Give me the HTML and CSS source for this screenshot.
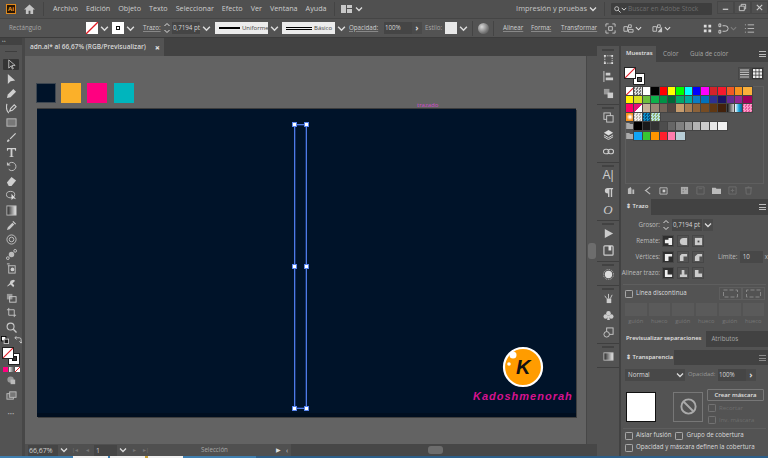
FILE: index.html
```html
<!DOCTYPE html>
<html lang="es">
<head><meta charset="utf-8"><title>Adobe Illustrator</title><link rel="stylesheet" href="styles.css"></head>
<body>
<svg class="defs" width="0" height="0">
  <symbol id="chev" viewBox="0 0 8 8"><path d="M1 2.5 4 5.5 7 2.5" fill="none" stroke="#dcdcdc" stroke-width="1.3"/></symbol>
  <symbol id="box" viewBox="0 0 9 9"><rect x=".5" y=".5" width="8" height="8" rx="1" fill="none" stroke="#b8b8b8"/></symbol>
</svg>
<header class="menubar">
  <span class="ai-logo">Ai</span>
  <svg class="home" viewBox="0 0 12 11"><path d="M6 .5 0 6h2v5h3V7.5h2V11h3V6h2z" fill="#c4c4c4"/></svg>
  <i class="vsep first"></i>
  <nav class="menu"><span>Archivo</span><span>Edición</span><span>Objeto</span><span>Texto</span><span>Seleccionar</span><span>Efecto</span><span>Ver</span><span>Ventana</span><span>Ayuda</span></nav>
  <i class="vsep"></i>
  <svg class="layout-ic" viewBox="0 0 11 8"><path d="M0 0h5v8H0zM6 0h5v3H6zM6 4h5v4H6z" fill="#c8c8c8"/></svg>
  <svg class="ch" viewBox="0 0 8 8"><use href="#chev"/></svg>
  <span class="spacer"></span>
  <span class="workspace">Impresión y pruebas</span>
  <svg class="ch" viewBox="0 0 8 8"><use href="#chev"/></svg>
  <i class="vsep"></i>
  <div class="stock"><svg class="search" viewBox="0 0 9 9"><circle cx="3.5" cy="3.5" r="2.6" fill="none" stroke="#ddd"/><path d="M5.5 5.5 8.5 8.5" stroke="#ddd" stroke-width="1.2"/></svg><svg class="mini" viewBox="0 0 8 8"><use href="#chev"/></svg><span>Buscar en Adobe Stock</span></div>
  <div class="winbtns">
    <span><svg viewBox="0 0 10 10"><path d="M2 7h6" stroke="#ccc" stroke-width="1.4"/></svg></span>
    <span><svg viewBox="0 0 10 10"><path d="M1.5 3.5h5.5v5h-5.5zM3.500 3.5V1.500h5v5H7" fill="none" stroke="#ccc"/></svg></span>
    <span><svg viewBox="0 0 10 10"><path d="M2 2l6 6M8 2 2 8" stroke="#ccc" stroke-width="1.2"/></svg></span>
  </div>
</header>

<section class="controlbar">
  <span class="lbl sel-name">Rectángulo</span>
  <span class="swatch fill"><svg viewBox="0 0 12 12"><path d="M0 12 12 0" stroke="#e01b24" stroke-width="1.3"/></svg></span>
  <svg class="ch drop" viewBox="0 0 8 8"><use href="#chev"/></svg>
  <span class="swatch strokebox"><i></i></span>
  <svg class="ch drop" viewBox="0 0 8 8"><use href="#chev"/></svg>
  <span class="lbl link trazo">Trazo:</span>
  <svg class="stepper" viewBox="0 0 8 12"><path d="M1.5 4 4 1.5 6.5 4M1.5 8 4 10.5 6.5 8" fill="none" stroke="#ddd"/></svg>
  <span class="field w28">0,7194 pt</span>
  <svg class="ch drop" viewBox="0 0 8 8"><use href="#chev"/></svg>
  <span class="profile"><i class="line thick"></i><b>Uniforme</b></span>
  <svg class="ch drop" viewBox="0 0 8 8"><use href="#chev"/></svg>
  <span class="profile second"><i class="line double"></i><b>Básico</b></span>
  <svg class="ch drop" viewBox="0 0 8 8"><use href="#chev"/></svg>
  <span class="lbl link opac">Opacidad:</span>
  <span class="field pct">100%</span>
  <span class="arrow-btn">›</span>
  <span class="lbl estilo">Estilo:</span>
  <span class="swatch style"></span>
  <svg class="ch drop" viewBox="0 0 8 8"><use href="#chev"/></svg>
  <i class="vsep ctl"></i>
  <span class="globe"></span>
  <i class="vsep ctl"></i>
  <span class="lbl link alinear">Alinear</span>
  <span class="lbl link forma">Forma:</span>
  <span class="lbl link transf">Transformar</span>
  <svg class="ci first-ci" viewBox="0 0 12 12"><path d="M1 4V1h3M8 1h3v3M11 8v3H8M4 11H1V8M4 4h4v4H4z" fill="none" stroke="#c6c6c6"/></svg>
  <svg class="ci ci2" viewBox="0 0 12 12"><path d="M1 4h4v5H1zM6 2h3v3H6zM6 7h5v3H6z" fill="none" stroke="#c6c6c6"/></svg>
  <svg class="ch small" viewBox="0 0 8 8"><use href="#chev"/></svg>
  <svg class="ci ci3" viewBox="0 0 12 12"><path d="M1 4h4v5H1zM6 2h3v3H6z" fill="none" stroke="#c6c6c6"/><path d="M6 10 11 4v6z" fill="#c6c6c6"/></svg>
  <svg class="ch small" viewBox="0 0 8 8"><use href="#chev"/></svg>
  <svg class="ci ci4" viewBox="0 0 12 12"><path d="M2 2h3v3H2zM7 2h3v3H7zM2 7h3v3H2zM7 7h3v3H7z" fill="#dcdcdc"/></svg>
  <svg class="ci ci5" viewBox="0 0 12 12"><path d="M1 1h2v3H1zM1 8h2v3H1zM5 3h3q3 0 3 3t-3 3H5" fill="none" stroke="#d0d0d0"/></svg>
  <svg class="ch small dim" viewBox="0 0 8 8"><use href="#chev"/></svg>
  <svg class="ci ci6" viewBox="0 0 12 12"><path d="M1 2h1M4 2h7M1 6h1M4 6h7M1 10h1M4 10h7" stroke="#bdbdbd"/></svg>
</section>

<main class="workspace-area">
  <aside class="toolbar">
    <div class="collapse">‣‣</div>
    <div class="grip"></div>
    <div class="tools">
      <span class="tool active"><svg viewBox="0 0 12 12"><path d="M3 1v9l2.5-2.500L7 11l1-.5L6.500 7H10z" fill="none" stroke="#ddd" stroke-width=".8"/></svg></span>
      <span class="tool"><svg viewBox="0 0 12 12"><path d="M2 0v11l3-3 5-1z" fill="#cfcfcf"/></svg></span>
      <span class="tool"><svg viewBox="0 0 12 12"><path d="M1 11 2 7l6-6 3 3-6 6z" fill="#cfcfcf"/></svg></span>
      <span class="tool"><svg viewBox="0 0 12 12"><path d="M1 1C0 5 1 9 3 11M4 9l1-3 4-4 2 2-4 4z" fill="none" stroke="#cfcfcf" stroke-width="1.2"/></svg></span>
      <span class="tool"><svg viewBox="0 0 12 12"><rect x="1" y="2" width="10" height="8" fill="#777" stroke="#bbb"/></svg></span>
      <span class="tool"><svg viewBox="0 0 12 12"><path d="M1 11q0-3 2-3l1 1q0 2-3 2zM4 7l6-6 1 1-6 6z" fill="#cfcfcf"/></svg></span>
      <span class="tool"><svg viewBox="0 0 12 12"><path d="M1 1h10v3h-1L9.500 2.500H7V10l1.500.5V11h-5v-.5L5 10V2.500H2.500L2 4H1z" fill="#cfcfcf"/></svg></span>
      <span class="tool"><svg viewBox="0 0 12 12"><path d="M3 3a4.500 4.500 0 1 1 0 6" fill="none" stroke="#c4c4c4"/><path d="M1 1v4h4z" fill="#c4c4c4"/></svg></span>
      <span class="tool"><svg viewBox="0 0 12 12"><path d="M1 7 6 1l5 4-5 6H3z" fill="#cfcfcf"/></svg></span>
      <span class="tool"><svg viewBox="0 0 12 12"><ellipse cx="5" cy="5" rx="4.500" ry="3.500" fill="none" stroke="#c4c4c4"/><path d="M6 4v7l2-2 3 1z" fill="#ddd"/></svg></span>
      <span class="tool"><svg viewBox="0 0 12 12"><defs><linearGradient id="gr"><stop offset="0" stop-color="#222"/><stop offset="1" stop-color="#eee"/></linearGradient></defs><rect x="1" y="1" width="10" height="10" fill="url(#gr)" stroke="#bbb"/></svg></span>
      <span class="tool"><svg viewBox="0 0 12 12"><path d="M1 11l1-3 5-5 2 2-5 5zM7 2l1-1 3 3-1 1z" fill="#c8c8c8"/></svg></span>
      <span class="tool"><svg viewBox="0 0 12 12"><circle cx="6" cy="6" r="5" fill="none" stroke="#c4c4c4"/><circle cx="6" cy="6" r="2.500" fill="none" stroke="#c4c4c4"/></svg></span>
      <span class="tool"><svg viewBox="0 0 12 12"><circle cx="6" cy="6" r="3" fill="#bbb"/><circle cx="10" cy="2" r="1.500" fill="none" stroke="#ccc"/><circle cx="2" cy="10" r="1.500" fill="none" stroke="#ccc"/></svg></span>
      <span class="tool"><svg viewBox="0 0 12 12"><rect x="3" y="3" width="7" height="8" fill="none" stroke="#c4c4c4"/><circle cx="7" cy="7" r="2" fill="#ccc"/><path d="M1 1h3M2 3h1" stroke="#ccc"/></svg></span>
      <span class="tool"><svg viewBox="0 0 12 12"><path d="M1 9l3-3 1-3 3-1 2 1-3 3 2 2-1 2-3-3-3 2z" fill="#cfcfcf"/></svg></span>
      <span class="tool"><svg viewBox="0 0 12 12"><rect x="1" y="1" width="6" height="6" fill="#999"/><rect x="4" y="4" width="7" height="6" fill="none" stroke="#ccc"/></svg></span>
      <span class="tool"><svg viewBox="0 0 12 12"><path d="M3 1v8h8M1 3h8v8" fill="none" stroke="#c4c4c4"/></svg></span>
      <span class="tool"><svg viewBox="0 0 12 12"><circle cx="5" cy="5" r="3.800" fill="none" stroke="#c8c8c8" stroke-width="1.2"/><path d="M8 8l3.500 3.500" stroke="#c8c8c8" stroke-width="1.5"/></svg></span>
    </div>
    <div class="swap-row">
      <svg viewBox="0 0 9 9"><rect x=".5" y=".5" width="5" height="5" fill="#fff" stroke="#000"/><rect x="3.500" y="3.500" width="5" height="5" fill="#222" stroke="#ccc"/></svg>
      <svg viewBox="0 0 9 9"><path d="M1 2h5q2 0 2 2v4M1 2l2-2M1 2l2 2M8 8 6 6M8 8l2-2" fill="none" stroke="#ccc"/></svg>
    </div>
    <div class="fillstroke">
      <span class="fs-stroke"><i></i></span>
      <span class="fs-fill"><svg viewBox="0 0 12 12"><path d="M0 12 12 0" stroke="#e01b24" stroke-width="1.3"/></svg></span>
    </div>
    <div class="modes"><i class="m1"></i><i class="m2"></i><i class="m3"><svg viewBox="0 0 5 5"><path d="M0 5 5 0" stroke="#e01b24"/></svg></i></div>
    <span class="tool t-draw"><svg viewBox="0 0 12 12"><circle cx="5" cy="5" r="3.500" fill="#999"/><rect x="5" y="5" width="5" height="5" fill="#bbb"/></svg></span>
    <span class="tool t-screen"><svg viewBox="0 0 12 12"><rect x="1" y="4" width="7" height="6" fill="#666" stroke="#bbb"/><rect x="4" y="2" width="7" height="6" fill="#777" stroke="#bbb"/></svg></span>
    <div class="dots">•••</div>
  </aside>

  <div class="center">
    <div class="tabs"><div class="doc-tab"><span>adn.ai* al 66,67% (RGB/Previsualizar)</span><b>×</b></div></div>
    <div class="canvas-row">
      <div class="canvas">
        <i class="chip c1"></i><i class="chip c2"></i><i class="chip c3"></i><i class="chip c4"></i>
        <div class="artboard"></div>
        <span class="smart">trazado</span>
        <div class="selection">
          <i class="h tl"></i><i class="h tr"></i><i class="h ml"></i><i class="h mr"></i><i class="h bl"></i><i class="h br"></i>
        </div>
        <div class="logo"><svg viewBox="0 0 42 42"><circle cx="21" cy="21" r="19" fill="#ff9c00" stroke="#fff" stroke-width="2.2"/><circle cx="11" cy="9" r="3.500" fill="#fff"/><circle cx="7" cy="18" r="1.800" fill="#fff"/></svg><b>K</b></div>
        <div class="brand">Kadoshmenorah</div>
      </div>
      <div class="vscroll"><i></i></div>
    </div>
    <footer class="status">
      <span class="zoomfield">66,67%</span>
      <svg class="ch" viewBox="0 0 8 8"><use href="#chev"/></svg>
      <span class="nav">|◂</span><span class="nav">◂</span>
      <span class="page">1</span>
      <svg class="ch" viewBox="0 0 8 8"><use href="#chev"/></svg>
      <span class="nav">▸</span><span class="nav">▸|</span>
      <span class="mode">Selección</span>
      <span class="play">▶</span><span class="back">‹</span>
      <div class="hscroll"><i></i></div>
    </footer>
  </div>

  <aside class="dock">
    <div class="dock-group">
      <svg viewBox="0 0 12 12"><path d="M2 2h8v8H2z" fill="none" stroke="#ccc" stroke-dasharray="1.500 1"/><path d="M1 1h2v2H1zM9 1h2v2H9zM1 9h2v2H1zM9 9h2v2H9z" fill="#ddd"/></svg>
      <svg viewBox="0 0 12 12"><path d="M1 0v12" stroke="#ccc"/><path d="M3 2h5v3H3zM3 7h8v3H3z" fill="#ccc"/></svg>
      <svg viewBox="0 0 12 12"><path d="M1 1h6v6H1z" fill="#999"/><path d="M5 5h6v6H5z" fill="#ccc"/></svg>
    </div>
    <div class="dock-group">
      <svg viewBox="0 0 12 12"><rect x="1" y="1" width="7" height="7" fill="none" stroke="#ccc"/><rect x="4" y="4" width="7" height="7" fill="#535353" stroke="#ccc"/></svg>
      <svg viewBox="0 0 12 12"><path d="M6 1 11 4 6 7 1 4z" fill="#ddd"/><path d="M1 6.500 6 9.500 11 6.500M1 8.500 6 11.500 11 8.500" fill="none" stroke="#ddd"/></svg>
      <svg viewBox="0 0 12 12"><rect x=".5" y="3.500" width="6" height="5" rx="2.500" fill="none" stroke="#ccc" stroke-width="1.2"/><rect x="5.500" y="3.500" width="6" height="5" rx="2.500" fill="none" stroke="#ccc" stroke-width="1.2"/></svg>
    </div>
    <div class="dock-group">
      <span class="glyph">A|</span>
      <svg viewBox="0 0 12 12"><path d="M5 1h6v1.500h-1V11H8.500V2.500H7V11H5.500V7Q2 7 2 4t3-3z" fill="#ccc"/></svg>
      <span class="glyph ital">O</span>
    </div>
    <div class="dock-group">
      <svg viewBox="0 0 12 12"><path d="M2 1v10l9-5z" fill="#ccc"/></svg>
      <svg viewBox="0 0 12 12"><rect x="1" y="1" width="10" height="10" rx="1" fill="none" stroke="#ccc" stroke-width="1.3"/><path d="M6 1h3v5H6z" fill="#ddd"/></svg>
    </div>
    <div class="dock-group">
      <svg viewBox="0 0 12 12"><circle cx="6" cy="6" r="4" fill="#ddd"/><circle cx="6" cy="6" r="5.500" fill="none" stroke="#bbb" stroke-dasharray="1 1"/></svg>
    </div>
    <div class="dock-group">
      <svg viewBox="0 0 12 12"><path d="M4 6h5v5H4z" fill="#ccc"/><path d="M6 6V1M8 6l2-4M4 6 2 3" stroke="#ccc"/></svg>
      <svg viewBox="0 0 12 12"><circle cx="6" cy="3.500" r="2.500" fill="#ccc"/><circle cx="3" cy="7" r="2.500" fill="#ccc"/><circle cx="9" cy="7" r="2.500" fill="#ccc"/><path d="M5.500 6h1l1 5h-3z" fill="#ccc"/></svg>
      <svg viewBox="0 0 12 12"><rect x="4" y="1" width="7" height="7" fill="none" stroke="#ccc"/><circle cx="4" cy="8" r="3" fill="#535353" stroke="#ccc"/></svg>
    </div>
    <div class="dock-group">
      <svg viewBox="0 0 12 12"><rect x="1" y="2" width="10" height="8" fill="url(#gr)" stroke="#bbb"/></svg>
    </div>
  </aside>

  <div class="panels">
    <section class="panel swatches">
      <div class="ptabs"><span class="on t1">Muestras</span><span class="t2">Color</span><span class="t3">Guía de color</span><em class="burger"></em></div>
      <div class="sw-head">
        <div class="fs-mini"><span class="mini-stroke"><i></i></span><span class="mini-fill"><svg viewBox="0 0 12 12"><path d="M0 12 12 0" stroke="#e01b24" stroke-width="1.3"/></svg></span></div>
        <div class="views"><span class="list"><svg viewBox="0 0 9 9"><path d="M0 1h9M0 3.300h9M0 5.600h9M0 8h9" stroke="#ccc"/></svg></span><span class="grid on"><svg viewBox="0 0 9 9"><path d="M0 0h2.500v2.500H0zM3.200 0h2.500v2.500H3.200zM6.500 0H9v2.500H6.500zM0 3.200h2.500v2.500H0zM3.200 3.200h2.500v2.500H3.200zM6.500 3.200H9v2.500H6.500zM0 6.500h2.500V9H0zM3.200 6.500h2.500V9H3.200zM6.500 6.500H9V9H6.500z" fill="#eee"/></svg></span></div>
      </div>
      <div class="sw-list">
        <div class="sw-row">
          <i class="none"><svg viewBox="0 0 8 8"><path d="M0 8 8 0" stroke="#e01b24"/></svg></i><i class="pat1"></i><i style="background:#fff"></i><i style="background:#000"></i><i style="background:#f00"></i><i style="background:#ff0"></i><i style="background:#0f0"></i><i style="background:#0ff"></i><i style="background:#00f"></i><i style="background:#f0f"></i><i style="background:#d4232a"></i><i style="background:#f7192e"></i><i style="background:#f15a24"></i><i style="background:#f7931e"></i><i style="background:#fbb03b"></i>
        </div>
        <div class="sw-row">
          <i style="background:#fff200"></i><i style="background:#d9e021"></i><i style="background:#6cbe3f"></i><i style="background:#0db14b"></i><i style="background:#009245"></i><i style="background:#006837"></i><i style="background:#00a86b"></i><i style="background:#00a99d"></i><i style="background:#0a7cc4"></i><i style="background:#0071bc"></i><i style="background:#2e3192"></i><i style="background:#1b1464"></i><i style="background:#662d91"></i><i style="background:#93278f"></i><i style="background:#9e005d"></i>
        </div>
        <div class="sw-row">
          <i style="background:#ff0066"></i><i class="diag"></i><i style="background:#c7b299"></i><i style="background:#998675"></i><i style="background:#736357"></i><i style="background:#534741"></i><i style="background:#c69c6d"></i><i style="background:#a67c52"></i><i style="background:#8c6239"></i><i style="background:#754c24"></i><i style="background:#603813"></i><i style="background:#42210b"></i><i class="g-gray"></i><i class="g-blue"></i><i class="pat-pink"></i>
        </div>
        <div class="sw-row">
          <i class="rad"></i><i class="pat2"></i><i class="pat3"></i><i class="pat4"></i>
        </div>
        <div class="sw-row gapped">
          <svg class="folder" viewBox="0 0 8 8"><path d="M0 1h3l1 1h4v5H0z" fill="#aaa"/></svg>
          <i style="background:#000"></i><i style="background:#1a1a1a"></i><i style="background:#333"></i><i style="background:#4d4d4d"></i><i style="background:#666"></i><i style="background:#808080"></i><i style="background:#999"></i><i style="background:#b3b3b3"></i><i style="background:#ccc"></i><i style="background:#e6e6e6"></i><i style="background:#f2f2f2"></i>
        </div>
        <div class="sw-row gapped">
          <svg class="folder" viewBox="0 0 8 8"><path d="M0 1h3l1 1h4v5H0z" fill="#aaa"/></svg>
          <i style="background:#10a5f5"></i><i style="background:#38c532"></i><i style="background:#ff9500"></i><i style="background:#ff1f2d"></i><i style="background:#ff7bac"></i><i style="background:#b7cdd6"></i>
        </div>
      </div>
      <div class="sw-foot">
        <svg viewBox="0 0 10 10"><path d="M1 9V3l3-2 1 2v6zM6 9V4h2v5z" fill="#bbb"/></svg>
        <svg viewBox="0 0 10 10"><path d="M8 1 3 5l5 4M2 5h2" fill="none" stroke="#bbb" stroke-width="1.3"/></svg>
        <svg viewBox="0 0 10 10"><path d="M1 2h8v7H1z" fill="none" stroke="#bbb"/><path d="M4 4h3v3H4z" fill="#ccc"/></svg>
        <svg class="sf4" viewBox="0 0 10 10"><path d="M1 1h8v8H1z" fill="#aaa"/><path d="M3 3h1v1H3zM6 3h1v1H6zM3 6h1v1H3z" fill="#444"/></svg>
        <svg class="off" viewBox="0 0 10 10"><path d="M1 1h8v8H1zM3 3h4" fill="none" stroke="#777"/></svg>
        <svg viewBox="0 0 10 10"><path d="M0 2h4l1 1h5v6H0z" fill="#bbb"/></svg>
        <svg class="off" viewBox="0 0 10 10"><path d="M1 1h8v8H1zM5 3v4M3 5h4" fill="none" stroke="#777"/></svg>
        <svg class="off" viewBox="0 0 10 10"><path d="M2 2h6l-.5 7h-5zM1 2h8M4 1h2" fill="none" stroke="#777"/></svg>
      </div>
    </section>

    <section class="panel stroke">
      <div class="ptabs single"><span class="on">⇕ Trazo</span><em class="burger"></em></div>
      <div class="st-row">
        <label class="st-label">Grosor:</label>
        <svg class="stepper" viewBox="0 0 8 12"><path d="M1.5 4 4 1.5 6.5 4M1.5 8 4 10.5 6.5 8" fill="none" stroke="#ddd"/></svg>
        <span class="field gro">0,7194 pt</span>
        <span class="chbtn"><svg class="ch" viewBox="0 0 8 8"><use href="#chev"/></svg></span>
      </div>
      <div class="st-row">
        <label class="st-label">Remate:</label>
        <span class="ibtn on"><svg viewBox="0 0 10 10"><path d="M5 1h4v8H5zM1 3h4v4H1z" fill="#eee"/></svg></span>
        <span class="ibtn"><svg viewBox="0 0 10 10"><path d="M9 1H5a4 4 0 0 0 0 8h4z" fill="#ccc"/></svg></span>
        <span class="ibtn"><svg viewBox="0 0 10 10"><path d="M1 1h8v8H1z" fill="#ccc"/><path d="M4 4h2v2H4z" fill="#444"/></svg></span>
      </div>
      <div class="st-row">
        <label class="st-label">Vértices:</label>
        <span class="ibtn on"><svg viewBox="0 0 10 10"><path d="M1 1h8v3H5v5H1z" fill="#eee"/></svg></span>
        <span class="ibtn"><svg viewBox="0 0 10 10"><path d="M3 1h6v3H5v5H1V3z" fill="#ccc"/></svg></span>
        <span class="ibtn"><svg viewBox="0 0 10 10"><path d="M4 1h5v3H6v5H1V4z" fill="#ccc"/></svg></span>
        <label class="st-limit">Límite:</label>
        <span class="field lim">10</span>
        <span class="x">x</span>
      </div>
      <div class="st-row">
        <label class="st-label">Alinear trazo:</label>
        <span class="ibtn on"><svg viewBox="0 0 10 10"><path d="M1 1h3v5h5v3H1z" fill="#eee"/></svg></span>
        <span class="ibtn"><svg viewBox="0 0 10 10"><path d="M3 1h3v5h3v3H1V6h2z" fill="#ccc"/></svg></span>
        <span class="ibtn"><svg viewBox="0 0 10 10"><path d="M1 1h4v4h4v4H1z" fill="#ccc"/></svg></span>
      </div>
      <hr class="rule">
      <div class="dash-row">
        <svg class="cb" viewBox="0 0 9 9"><use href="#box"/></svg><span class="cb-text">Línea discontinua</span>
        <div class="dash-btns"><span><svg viewBox="0 0 16 9"><path d="M1 1h14v7H1z" fill="none" stroke="#888" stroke-dasharray="4 2"/></svg></span><span><svg viewBox="0 0 16 9"><path d="M1 1h14v7H1z" fill="none" stroke="#888" stroke-dasharray="4 2" stroke-dashoffset="2"/></svg></span></div>
      </div>
      <div class="dash-grid">
        <div><i></i>guión</div><div><i></i>hueco</div><div><i></i>guión</div><div><i></i>hueco</div><div><i></i>guión</div><div><i></i>hueco</div>
      </div>
    </section>

    <div class="ptabs sep"><span class="on">Previsualizar separaciones</span><span>Atributos</span></div>

    <section class="panel transp">
      <div class="ptabs single"><span class="on">⇕ Transparencia</span><em class="burger dim"></em></div>
      <div class="tr-row">
        <span class="blend">Normal<svg class="ch" viewBox="0 0 8 8"><use href="#chev"/></svg></span>
        <span class="tr-op">Opacidad:</span>
        <span class="field trp">100%</span>
        <span class="arrow-btn">›</span>
      </div>
      <div class="tr-thumbs">
        <span class="thumb"></span>
        <span class="nomask"><svg viewBox="0 0 20 20"><circle cx="10" cy="10" r="7.500" fill="none" stroke="#aaa" stroke-width="2"/><path d="M5 5l10 10" stroke="#aaa" stroke-width="2"/></svg></span>
        <div class="mask-col">
          <span class="mask-btn">Crear máscara</span>
          <span class="cbline off"><svg class="cb" viewBox="0 0 9 9"><use href="#box"/></svg>Recortar</span>
          <span class="cbline off"><svg class="cb" viewBox="0 0 9 9"><use href="#box"/></svg>Inv. máscara</span>
        </div>
      </div>
      <hr class="rule tight">
      <div class="cb-row"><svg class="cb" viewBox="0 0 9 9"><use href="#box"/></svg><span>Aislar fusión</span><svg class="cb g2" viewBox="0 0 9 9"><use href="#box"/></svg><span>Grupo de cobertura</span></div>
      <div class="cb-row"><svg class="cb" viewBox="0 0 9 9"><use href="#box"/></svg><span>Opacidad y máscara definen la cobertura</span></div>
    </section>
  </div>
</main>
<div class="taskbar"><i class="b1"></i><i class="w"></i><i class="b2"></i><i class="w"></i><i class="b3"></i><i class="w"></i><i class="b1"></i><i class="fill-b"></i></div>
</body>
</html>
```

FILE: styles.css
```css
*{box-sizing:border-box}
html,body{margin:0;height:458px;width:768px;overflow:hidden}
body{display:flex;flex-direction:column;background:#535353;color:#d2d2d2;font:7.5px/1 "Open Sans","Liberation Sans",sans-serif}
.defs{position:absolute}
svg{display:block;flex:none}
i{display:block;font-style:normal}
.ch{width:8px;height:8px}
.spacer{flex:1}

.menubar{height:18px;flex:none;display:flex;align-items:center;background:#505050;padding-left:6px}
.ai-logo{width:10px;height:10px;background:#2a1603;border:1px solid #e08a1e;color:#f59b23;font:bold 6px/8px "Open Sans",sans-serif;text-align:center}
.home{width:11px;height:10px;margin-left:8px}
.vsep{width:1px;height:14px;background:#444;margin:0 7px;flex:none}
.vsep.first{margin:0 9px 0 8px}
.menu{display:flex;gap:8px;font-size:7.2px;color:#cdcdcd}
.layout-ic{width:11px;height:8px;margin-left:-1px}
.layout-ic + .ch{margin-left:3px}
.workspace{font-size:7.4px;color:#c6c6c6;margin-right:2px}
.stock{width:101px;height:12px;background:#3e3e3e;border-radius:1px;display:flex;align-items:center;padding-left:3px;margin-left:-1px;color:#6e6e6e;font-size:6.6px}
.search{width:7px;height:7px}
.mini{width:6px;height:6px;margin-right:1px}
.winbtns{display:flex;margin-left:5px;height:13px;align-self:flex-start;margin-top:1px}
.winbtns span{width:17px;height:13px;border:1px solid #474747;display:flex;align-items:center;justify-content:center}
.winbtns svg{width:9px;height:9px}

.controlbar{height:20px;flex:none;display:flex;align-items:center;background:#535353;border-top:1px solid #454545;border-bottom:1px solid #3c3c3c;padding-left:9px;font-size:6.2px;color:#bdbdbd}
.lbl{white-space:nowrap;flex:none}
.link{text-decoration:underline;text-decoration-color:#888;color:#cfcfcf}
.sel-name{width:77px;color:#a8a8a8}
.swatch{width:12px;height:12px;background:#fff;flex:none;display:block}
.swatch svg{width:12px;height:12px}
.drop{width:9px;height:9px;margin-left:2px}
.strokebox{margin-left:3px;display:flex;align-items:center;justify-content:center}
.strokebox i{width:4px;height:4px;border:1px solid #111}
.trazo{margin-left:8px;width:16px}
.stepper{width:8px;height:12px;margin-left:4px}
.field{background:#454545;height:12px;line-height:12px;padding:0 1px;color:#d6d6d6;flex:none;white-space:nowrap}
.w28{width:28px;margin-left:1px}
.profile{width:53px;height:12px;background:#ececec;display:flex;align-items:center;padding-left:4px;margin-left:4px;color:#444;flex:none;overflow:hidden}
.profile b{font-weight:400;margin-left:2px;font-size:6px;white-space:nowrap}
.line{height:2px;background:#000;width:21px;flex:none}
.double{height:3px;background:none;border-top:1px solid #000;border-bottom:1px solid #000;width:26px}
.second{margin-left:3px}
.opac{margin-left:3px;width:30px}
.pct{width:28px;margin-left:5px;padding-left:1px}
.arrow-btn{width:10px;height:12px;text-align:center;font:bold 9px/11px "Open Sans",sans-serif;color:#ddd;flex:none;background:#4a4a4a}
.estilo{width:19px;margin-left:3px;color:#a8a8a8}
.style{background:#e8e8e8;margin-left:1px}
.vsep.ctl{margin:0 4px;height:15px}
.globe{width:11px;height:11px;border-radius:50%;background:radial-gradient(circle at 35% 35%,#d8d8d8,#777 60%,#444);flex:none;margin-left:1px}
.alinear{margin-left:5px;width:20px}
.forma{margin-left:8px;width:20px}
.transf{margin-left:10px;width:33px}
.ci{width:11px;height:11px}
.first-ci{margin-left:11px}
.ci2{margin-left:7px}
.small{width:7px;height:7px;margin-left:1px}
.ci3{margin-left:10px}
.ci4{margin-left:31px}
.ci5{margin-left:5px}
.dim{opacity:.3}
.ci6{margin-left:7px}

.workspace-area{flex:1;min-height:0;display:flex}
.toolbar{width:25px;flex:none;background:#535353;border-right:3px solid #474747;display:flex;flex-direction:column;align-items:center}
.collapse{height:7px;width:100%;background:#424242;font-size:5px;line-height:6px;color:#bbb;padding-left:2px}
.grip{width:12px;height:1px;background:#3e3e3e;margin:6px 0}
.tools{display:flex;flex-direction:column;align-items:center;gap:3.5px;padding-top:1px}
.tool{width:16px;height:11.1px;display:flex;align-items:center;justify-content:center;border-radius:1px;flex:none}
.tool svg{width:11px;height:11px}
.tool.active{background:#353535}
.swap-row{display:flex;gap:5px;margin-top:3px}
.swap-row svg{width:8px;height:8px}
.fillstroke{position:relative;width:18px;height:20px;margin-top:3px;flex:none}
.fs-fill{position:absolute;left:0;top:0;width:12px;height:12px;background:#fff;border:1px solid #222}
.fs-fill svg{width:10px;height:10px}
.fs-stroke{position:absolute;right:0;bottom:2px;width:12px;height:12px;background:#fff;border:1px solid #222;display:flex;align-items:center;justify-content:center}
.fs-stroke i{width:5px;height:5px;background:#333;border:1px solid #111}
.modes{display:flex;gap:1px;margin-top:0}
.modes i{width:5px;height:5px}
.m1{background:#ff007f}
.m2{background:linear-gradient(90deg,#eee,#555)}
.m3{background:#fff}
.t-draw{margin-top:3px}
.t-screen{margin-top:4px}
.dots{margin-top:10px;font-size:6px;color:#aaa}

.center{width:572px;flex:none;display:flex;flex-direction:column;min-height:0;background:#636363}
.tabs{height:18px;flex:none;background:#424242}
.doc-tab{width:139px;height:18px;background:#535353;display:flex;align-items:center;padding-left:5px;font-size:6.5px;color:#d8d8d8;font-weight:600}
.doc-tab span{white-space:nowrap}
.doc-tab b{margin-left:auto;margin-right:4px;font-size:9px;color:#ddd}
.canvas-row{flex:1;display:flex;min-height:0}
.canvas{flex:1;position:relative;background:#636363}
.chip{position:absolute;top:27px;width:20px;height:20px}
.c1{left:11px;background:#001329;border:1px solid #3d4650}
.c2{left:36px;background:#fbb029}
.c3{left:62px;background:#ff0080}
.c4{left:89px;background:#00b5bd}
.artboard{position:absolute;left:12px;top:53px;width:539px;height:308px;background:#001329;border-bottom:4px solid #000e1f;box-shadow:1px 1px 0 #3f3f3f,0 -1px 0 #3c3c3c}
.smart{position:absolute;left:392px;top:46px;color:#d24ccb;font-size:6px}
.selection{position:absolute;left:269px;top:68px;width:13px;height:285px;border:1px solid #4f7be6;box-shadow:inset 0 0 0 .5px #2b4fa8}
.h{position:absolute;width:5px;height:5px;background:#fff;border:1px solid #5a86f0}
.tl{left:-3px;top:-3px}
.tr{right:-3px;top:-3px}
.ml{left:-3px;top:139px}
.mr{right:-3px;top:139px}
.bl{left:-3px;bottom:-3px}
.br{right:-3px;bottom:-3px}
.logo{position:absolute;left:477px;top:290px;width:42px;height:42px}
.logo svg{width:42px;height:42px}
.logo b{position:absolute;left:14px;top:10px;font:italic bold 20px/22px "Liberation Sans",sans-serif;color:#111}
.brand{position:absolute;left:448px;top:334px;font:italic bold 11px/13px "Liberation Sans",sans-serif;letter-spacing:1px;color:#d6128f}
.vscroll{width:11px;flex:none;background:#535353;border-left:1px solid #474747;position:relative}
.vscroll i{position:absolute;left:1px;top:187px;width:8px;height:16px;background:#6d6d6d;border-radius:3px}

.status{height:12px;flex:none;background:#505050;display:flex;align-items:center;padding-left:3px;font-size:7px;color:#bbb}
.zoomfield{width:30px;height:11px;background:#454545;line-height:11px;padding-left:1px;color:#d0d0d0;flex:none}
.status .ch{margin:0 1px 0 2px}
.nav{width:12px;color:#777;font-size:6px;text-align:center;flex:none}
.page{width:23px;height:11px;background:#454545;padding-left:2px;line-height:11px;margin-left:1px;color:#ccc;flex:none}
.mode{margin-left:49px;width:75px;color:#a8a8a8;flex:none;font-size:6.2px}
.play{font-size:6px;flex:none;color:#ddd}
.back{margin-left:5px;color:#ccc;flex:none}
.hscroll{flex:1;height:12px;position:relative;margin-left:3px;background:#474747}
.hscroll i{position:absolute;left:137px;top:2px;width:15px;height:8px;border-radius:3px;background:#6d6d6d}

.dock{width:24px;flex:none;background:#535353;border-top:8px solid #424242;border-right:2px solid #424242;padding-top:1px;display:flex;flex-direction:column}
.dock-group{display:flex;flex-direction:column;align-items:center;gap:6px;padding:7px 0 5px;border-bottom:1px solid #3f3f3f;position:relative;flex:none}
.dock-group::before{content:"";position:absolute;top:2px;left:5px;right:5px;height:2px;background:#424242}
.dock-group svg{width:11px;height:11px}
.glyph{height:11px;font:12px/11px "Liberation Sans",sans-serif;color:#ccc}
.ital{font:italic 13px/11px "Liberation Serif",serif}

.panels{width:147px;flex:none;display:flex;flex-direction:column;background:#535353;border-top:8px solid #424242;min-height:0}
.panel{flex:none}
.ptabs{height:16px;display:flex;align-items:stretch;background:#424242;position:relative;font-size:6.2px;color:#a6a6a6;flex:none}
.ptabs span{display:flex;align-items:center;padding:0 5px;white-space:nowrap}
.ptabs .on{background:#535353;color:#e4e4e4;font-weight:600;font-size:5.9px}
.ptabs .t1{width:35px}
.ptabs .t2{width:28px;padding-left:7px}
.ptabs .t3{width:46px;padding-left:6px}
.burger{position:absolute;right:2px;top:5px;width:7px;height:6px;border-top:1px solid #bbb;border-bottom:1px solid #bbb}
.burger::after{content:"";display:block;height:1px;margin-top:1.5px;background:#bbb}
.burger.dim{opacity:.6}

.sw-head{height:24px;display:flex;justify-content:space-between;padding:5px 4px 0 3px}
.fs-mini{position:relative;width:18px;height:18px}
.mini-fill{position:absolute;left:0;top:0;width:12px;height:12px;background:#fff;border:1px solid #222}
.mini-fill svg{width:10px;height:10px}
.mini-stroke{position:absolute;right:-3px;bottom:0;width:12px;height:12px;background:#fff;border:1px solid #222;display:flex;align-items:center;justify-content:center}
.mini-stroke i{width:5px;height:5px;background:#535353;border:1px solid #111}
.views{display:flex;align-self:flex-start}
.views span{width:13px;height:13px;display:flex;align-items:center;justify-content:center;border:1px solid #474747}
.views .on{background:#333}
.views svg{width:9px;height:9px}
.sw-list{margin:0 4px;height:98px;border:1px solid #5e5e5e}
.sw-row{display:flex;height:8.5px}
.sw-row i{width:8.38px;height:8.2px;flex:none;outline:.5px solid #444;outline-offset:-.5px}
.gapped{margin-top:1.2px}
.sw-row .none{background:#fff}
.sw-row i svg{width:100%;height:100%}
.folder{width:8.38px;height:8px;flex:none}
.pat1{background:repeating-conic-gradient(#ddd 0 25%,#777 0 50%) 0 0/3px 3px}
.pat2{background:repeating-conic-gradient(#eee 0 25%,#bba 0 50%) 0 0/3px 3px}
.pat3{background:repeating-conic-gradient(#0a8fc9 0 25%,#074c77 0 50%) 0 0/3px 3px}
.pat4{background:repeating-conic-gradient(#b6e0e6 0 25%,#8fb06e 0 50%) 0 0/3px 3px}
.pat-pink{background:repeating-conic-gradient(#ff9cc9 0 25%,#e55a9c 0 50%) 0 0/3px 3px}
.diag{background:linear-gradient(135deg,#e5127a 50%,#fff 50%)}
.g-gray{background:linear-gradient(90deg,#111,#eee)}
.g-blue{background:linear-gradient(90deg,#fff,#18a6dd,#034a78)}
.rad{background:radial-gradient(#fff 10%,#f7931e 60%)}
.sw-foot{height:13px;display:flex;align-items:center;padding-left:6px;gap:7px}
.sw-foot svg{width:9px;height:9px}
.sw-foot .sf4{margin-left:5px}
.off{opacity:.75}

.stroke{margin-top:2px;height:132px}
.single span.on{width:30px}
.transp .single{height:15px}
.transp .single span.on{width:53px}
.st-row{height:16px;display:flex;align-items:center;font-size:6.2px;color:#bdbdbd}
.stroke .ptabs + .st-row{margin-top:2px}
.st-label{width:39px;text-align:right;flex:none;white-space:nowrap}
.st-row .stepper{margin-left:2px;width:8px}
.gro{width:30px;margin-left:2px}
.chbtn{width:10px;height:12px;background:#4a4a4a;display:flex;align-items:center;justify-content:center;margin-left:1px}
.ibtn{width:12px;height:12px;margin-left:3px;border:1px solid #474747;display:flex;align-items:center;justify-content:center;flex:none}
.st-label + .ibtn{margin-left:2px}
.ibtn.on{background:#2f2f2f}
.ibtn svg{width:9px;height:9px}
.st-limit{margin-left:14px;width:20px;white-space:nowrap}
.lim{width:23px;margin-left:2px;padding-left:3px;background:#484848}
.x{margin-left:2px}
.rule{margin:3px 2px 0;border:0;border-top:1px solid #5e5e5e;height:0}
.dash-row{display:flex;align-items:center;height:15px;margin-top:1px;padding-left:4px;font-size:6.2px;color:#dadada}
.cb{width:8px;height:8px;flex:none}
.cb-text{margin-left:3px;flex:1}
.dash-btns{display:flex;margin-right:3px}
.dash-btns span{width:23px;height:13px;border:1px solid #5e5e5e;display:flex;align-items:center;justify-content:center}
.dash-btns svg{width:17px;height:9px}
.dash-grid{display:grid;grid-template-columns:repeat(6,1fr);gap:2px;padding:0 4px;margin-top:2px;font-size:5.8px;color:#777;text-align:center}
.dash-grid i{height:13px;background:#5a5a5a;margin-bottom:3px}

.sep{margin-top:0}
.transp{margin-top:3px}
.tr-row{display:flex;align-items:center;height:15px;margin-top:2.5px;padding-left:4px;font-size:6.2px}
.blend{width:60px;height:12px;background:#484848;display:flex;align-items:center;justify-content:space-between;padding:0 1px 0 3px;color:#ddd;flex:none}
.tr-op{margin-left:3px;color:#999;width:27px;font-size:5.8px;white-space:nowrap}
.trp{width:28px;margin-left:3px;padding-left:1px}
.tr-thumbs{display:flex;margin-top:6px;padding-left:5px;height:38px}
.thumb{width:30px;height:30px;background:#fff;border:1px solid #111;flex:none;margin-top:3px}
.nomask{width:30px;height:30px;border:1px solid #777;margin-left:17px;margin-top:3px;display:flex;align-items:center;justify-content:center;flex:none}
.nomask svg{width:19px;height:19px}
.mask-col{margin-left:4px;flex:1;display:flex;flex-direction:column;font-size:6px}
.mask-btn{width:57px;height:12px;border:1px solid #777;border-radius:1px;text-align:center;line-height:10px;color:#e0e0e0;font-weight:600}
.cbline{display:flex;align-items:center;gap:3px;height:12px;color:#777}
.mask-btn + .cbline{margin-top:1px}
.cbline .cb{opacity:.5;margin-left:1px}
.rule.tight{margin:1px 2px 0}
.cb-row{display:flex;align-items:center;gap:3px;height:12px;padding-left:4px;font-size:6.2px;color:#dadada}
.transp .rule + .cb-row{margin-top:1px}
.g2{margin-left:1px}

.taskbar{height:2px;flex:none;display:flex;background:#2b6aa0}
.taskbar i{height:2px}
.b1{width:73px;background:#3f7fb0}
.w{width:35px;background:#f2f2f2}
.b2{width:2px;background:#3f7fb0}
.b3{width:3px;background:#c9a23a}
.fill-b{flex:1;background:#2c5f8a}
```
